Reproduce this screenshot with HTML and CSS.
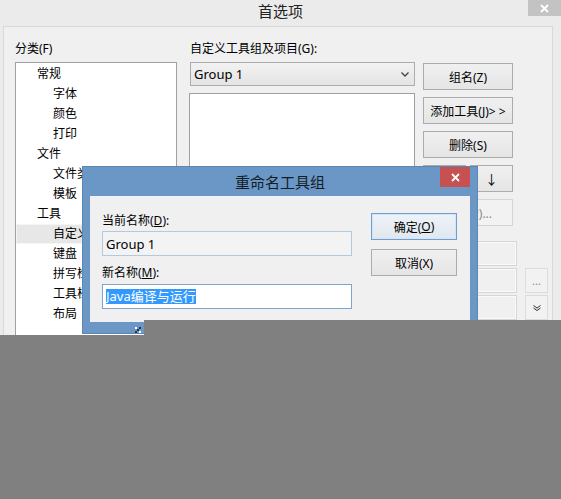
FILE: index.html
```html
<!DOCTYPE html>
<html lang="zh-CN">
<head>
<meta charset="utf-8">
<title>首选项</title>
<link rel="stylesheet" href="styles.css">
</head>
<body>
<div class="window">
  <div class="titlebar">
    <span class="title">首选项</span>
    <span class="win-close"><svg width="9" height="9" viewBox="0 0 9 9"><path d="M1 1L8 8M8 1L1 8" stroke="#fff" stroke-width="1.8"/></svg></span>
  </div>
  <div class="client">
    <div class="col-left">
      <div class="label">分类(F)</div>
      <div class="tree">
        <div class="node l1">常规</div>
        <div class="node l2">字体</div>
        <div class="node l2">颜色</div>
        <div class="node l2">打印</div>
        <div class="node l1">文件</div>
        <div class="node l2">文件类型</div>
        <div class="node l2">模板</div>
        <div class="node l1">工具</div>
        <div class="node l2 selected">自定义工具</div>
        <div class="node l2">键盘</div>
        <div class="node l2">拼写检查</div>
        <div class="node l2">工具栏</div>
        <div class="node l2">布局</div>
      </div>
    </div>
    <div class="col-right">
      <div class="top">
        <div class="col-mid">
          <div class="label">自定义工具组及项目(G):</div>
          <div class="combo"><span>Group 1</span><svg width="8" height="5" viewBox="0 0 8 5"><path d="M0.5 0.5L4 4L7.5 0.5" fill="none" stroke="#444" stroke-width="1.3"/></svg></div>
          <div class="listbox"></div>
        </div>
        <div class="col-btns">
          <div class="btn">组名(Z)</div>
          <div class="btn">添加工具(J)&gt; &gt;</div>
          <div class="btn">删除(S)</div>
          <div class="btn-pair">
            <div class="btn">↑</div>
            <div class="btn">↓</div>
          </div>
          <div class="btn disabled">属性(P)...</div>
        </div>
      </div>
      <div class="fields">
        <div class="field-row"><div class="field"></div></div>
        <div class="field-row"><div class="field"></div><div class="mini">...</div></div>
        <div class="field-row"><div class="field"></div><div class="mini"><svg width="8" height="6" viewBox="0 0 8 6"><path d="M0.5 0.5L4 3L7.5 0.5M0.5 3L4 5.5L7.5 3" fill="none" stroke="#333" stroke-width="1"/></svg></div></div>
      </div>
    </div>
  </div>
</div>

<div class="dialog">
  <div class="dlg-title">重命名工具组</div>
  <span class="dlg-close"><svg width="9" height="9" viewBox="0 0 9 9"><path d="M1 1L8 8M8 1L1 8" stroke="#fff" stroke-width="1.8"/></svg></span>
  <div class="dlg-client">
    <div class="dlg-form">
      <div class="dlabel">当前名称(<u>D</u>):</div>
      <div class="tfield readonly">Group 1</div>
      <div class="dlabel second">新名称(<u>M</u>):</div>
      <div class="tfield edit"><span class="sel">Java编译与运行</span></div>
    </div>
    <div class="dlg-btns">
      <div class="btn default">确定(<u>O</u>)</div>
      <div class="btn">取消(X)</div>
    </div>
  </div>
  <span class="grip"><svg width="6" height="6" viewBox="0 0 6 6"><rect x="0" y="0" width="2" height="2" fill="#fff"/><rect x="2" y="2" width="2" height="2" fill="#333"/><rect x="4" y="0" width="2" height="2" fill="#333"/><rect x="0" y="4" width="2" height="2" fill="#333"/><rect x="4" y="4" width="2" height="2" fill="#fff"/></svg></span>
</div>

<div class="shade"></div>
</body>
</html>
```

FILE: styles.css
```css
* { box-sizing: border-box; }

html, body {
  margin: 0;
  padding: 0;
}

body {
  width: 561px;
  height: 499px;
  overflow: hidden;
  position: relative;
  background: #808080;
  font-family: "Segoe UI", "Noto Sans", "Noto Sans CJK SC", sans-serif;
  font-size: 12px;
  color: #000;
}

/* main window */
.window {
  height: 335px;
  background: #ebebeb;
  display: flex;
  flex-direction: column;
  overflow: hidden;
}

.titlebar {
  height: 26px;
  position: relative;
  text-align: center;
  flex: none;
}

.title {
  display: inline-block;
  font-size: 15px;
  line-height: 22px;
  color: #222;
}

.win-close {
  position: absolute;
  right: 0;
  top: 0;
  width: 33px;
  height: 16px;
  background: #c3c3c3;
  display: flex;
  align-items: center;
  justify-content: center;
}

.client {
  flex: 1;
  margin: 0 8px 0 3px;
  border: 1px solid #d9d9d9;
  border-bottom: none;
  background: #f0f0f0;
  display: flex;
  padding: 14px 0 0 11px;
}

.label {
  height: 16px;
  line-height: 16px;
  white-space: nowrap;
}

.col-left {
  width: 162px;
  flex: none;
  display: flex;
  flex-direction: column;
}

.tree {
  margin-top: 5px;
  height: 300px;
  background: #fff;
  border: 1px solid #a0a0a0;
  padding-top: 1px;
  overflow: hidden;
}

.node {
  height: 20px;
  line-height: 20px;
  white-space: nowrap;
}

.node.l1 { padding-left: 21px; }
.node.l2 { padding-left: 37px; }

.node.selected {
  background: #e7e7e7;
  box-shadow: inset 0 0 0 1px #f5f5f5;
}

.col-right {
  margin-left: 12px;
  display: flex;
  flex-direction: column;
}

.top {
  display: flex;
}

.col-mid {
  width: 226px;
  display: flex;
  flex-direction: column;
}

.col-mid .label { padding-left: 1px; }

.combo {
  margin-top: 5px;
  margin-left: 1px;
  height: 24px;
  border: 1px solid #acacac;
  background: linear-gradient(#f2f2f2, #e4e4e4);
  display: flex;
  align-items: center;
  justify-content: space-between;
  padding: 0 5px 0 3px;
  font-size: 13px;
}

.listbox {
  margin-top: 7px;
  height: 133px;
  background: #fff;
  border: 1px solid #a0a0a0;
}

.col-btns {
  margin-left: 8px;
  width: 90px;
  padding-top: 22px;
  display: flex;
  flex-direction: column;
  gap: 7px;
}

.btn {
  height: 27px;
  border: 1px solid #acacac;
  background: linear-gradient(#f0f0f0, #e5e5e5);
  display: flex;
  align-items: center;
  justify-content: center;
  white-space: nowrap;
  color: #000;
}

.btn.disabled {
  border-color: #d5d5d5;
  background: #f2f2f2;
  color: #8a8a8a;
}

.btn-pair {
  display: flex;
  gap: 4px;
}

.btn-pair .btn {
  flex: 1;
  font-size: 13px;
}

.fields {
  margin-top: 15px;
  display: flex;
  flex-direction: column;
  gap: 2px;
}

.field-row {
  display: flex;
  gap: 8px;
  height: 25px;
}

.field {
  width: 328px;
  border: 1px solid #d6d6d6;
  background: #f0f0f0;
  box-shadow: inset 0 0 0 1px #fafafa;
}

.mini {
  width: 23px;
  border: 1px solid #dcdcdc;
  background: #f2f2f2;
  display: flex;
  align-items: center;
  justify-content: center;
  color: #888;
  font-size: 11px;
  line-height: 1;
}

/* rename dialog (window lying over the main one) */
.dialog {
  position: absolute;
  left: 82px;
  top: 166px;
  width: 396px;
  height: 168px;
  background: #6b97c6;
  border: 1px solid #5d86b3;
  display: flex;
  flex-direction: column;
  padding: 0 7px;
}

.dlg-title {
  height: 29px;
  line-height: 30px;
  text-align: center;
  font-size: 15px;
  color: #141c26;
  flex: none;
}

.dlg-close {
  position: absolute;
  right: 7px;
  top: 0;
  width: 30px;
  height: 20px;
  background: #c75050;
  display: flex;
  align-items: center;
  justify-content: center;
}

.dlg-client {
  height: 126px;
  background: #f0f0f0;
  display: flex;
  padding: 17px 13px 0 12px;
}

.dlg-form {
  width: 250px;
  display: flex;
  flex-direction: column;
}

.dlabel {
  height: 16px;
  line-height: 16px;
  white-space: nowrap;
}

.dlabel.second { margin-top: 9px; }

.tfield {
  height: 25px;
  display: flex;
  align-items: center;
  padding-left: 3px;
  font-size: 13px;
  white-space: nowrap;
}

.tfield.readonly {
  margin-top: 2px;
  border: 1px solid #b3c9df;
  background: #f3f3f3;
}

.tfield.edit {
  margin-top: 3px;
  border: 1px solid #7ea3cc;
  background: #fff;
}

.sel {
  background: #3399ff;
  color: #fff;
  line-height: 15px;
}

.dlg-btns {
  margin-left: 19px;
  width: 86px;
  display: flex;
  flex-direction: column;
  gap: 9px;
}

.btn.default {
  border-color: #6f9fd1;
  background: linear-gradient(#eef3f8, #e0e7ee);
  box-shadow: inset 0 0 0 1px #d3e5f7;
}

.grip {
  position: absolute;
  left: 52px;
  bottom: 0;
  width: 6px;
  height: 6px;
  display: flex;
}

/* gray area covering the lower part of the capture */
.shade {
  position: absolute;
  left: 144px;
  top: 320px;
  right: 0;
  bottom: 0;
  background: #808080;
}
```
